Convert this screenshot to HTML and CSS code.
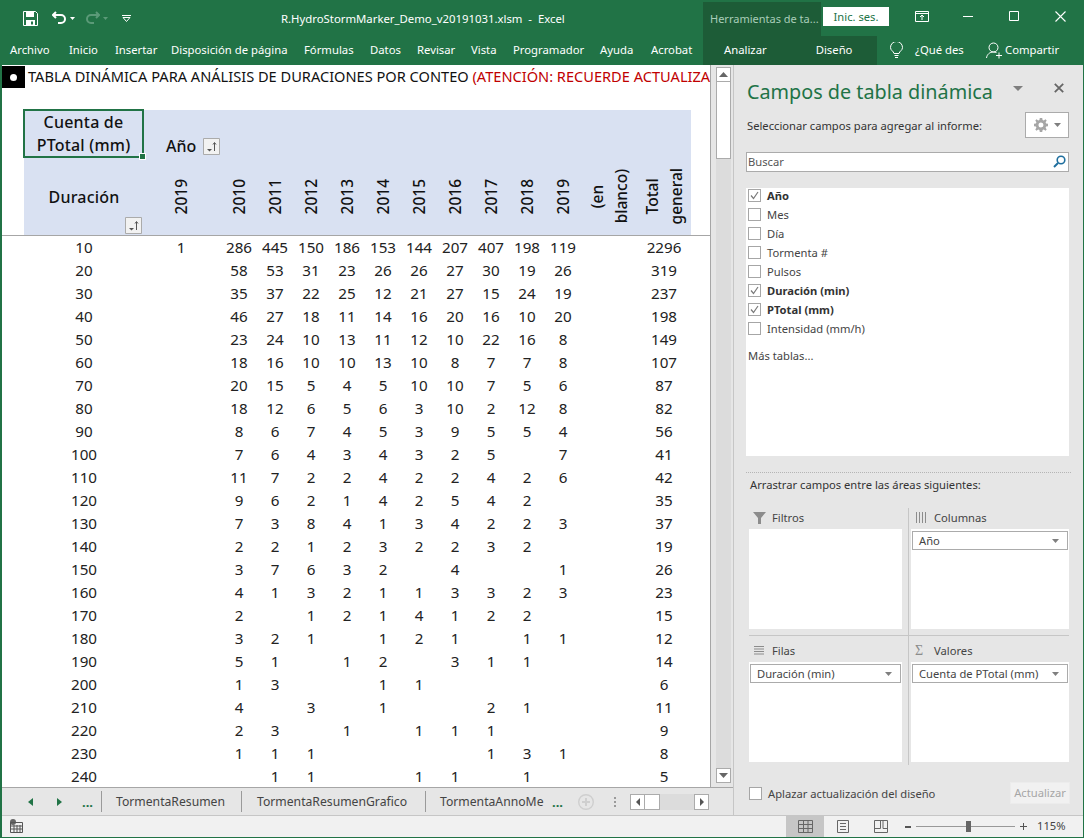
FILE: index.html
```html
<!DOCTYPE html>
<html lang="es">
<head>
<meta charset="utf-8">
<title>R.HydroStormMarker_Demo_v20191031.xlsm - Excel</title>
<link rel="stylesheet" href="styles.css">
</head>
<body>
<div class="window">
  <header class="titlebar">
    <div class="qat">
      <svg class="ic-save" width="15" height="15" viewBox="0 0 15 15"><path d="M.5.5h12l2 2v12H.5z" fill="none" stroke="#fff"/><path d="M3 1h8v5H3zM3 9h9v6H3z" fill="#fff"/><path d="M8 10.500h2v3H8z" fill="#217346"/></svg>
      <svg class="ic-undo" width="15" height="14" viewBox="0 0 15 14"><path d="M4 1 1 4l3 3M1.500 4H9a4 4 0 0 1 0 8H6" fill="none" stroke="#fff" stroke-width="2"/></svg>
      <svg class="ic-caret" width="5" height="3" viewBox="0 0 5 3"><path d="M0 0h5L2.500 3z" fill="#fff"/></svg>
      <svg class="ic-redo" width="15" height="14" viewBox="0 0 15 14"><path d="m11 1 3 3-3 3M13.500 4H6a4 4 0 0 0 0 8h3" fill="none" stroke="#5b9a78" stroke-width="2"/></svg>
      <svg class="ic-caret" width="5" height="3" viewBox="0 0 5 3"><path d="M0 0h5L2.500 3z" fill="#5b9a78"/></svg>
      <svg class="ic-custom" width="9" height="7" viewBox="0 0 9 7"><path d="M0 .5h9M1 2.500h7L4.500 6.500z" fill="none" stroke="#fff"/></svg>
    </div>
    <div class="doc-title">R.HydroStormMarker_Demo_v20191031.xlsm&nbsp; -&nbsp; Excel</div>
    <div class="context-title">Herramientas de ta...</div>
    <div class="signin">Inic. ses.</div>
    <svg class="ic-display" width="14" height="11" viewBox="0 0 14 11"><path d="M.5.500h13v10H.5zM.5 2.500h13M7 9V4M5 6l2-2 2 2" fill="none" stroke="#fff"/></svg>
    <svg class="ic-min" width="10" height="1" viewBox="0 0 10 1"><path d="M0 .5h10" stroke="#fff"/></svg>
    <svg class="ic-max" width="10" height="10" viewBox="0 0 10 10"><path d="M.5.500h9v9h-9z" fill="none" stroke="#fff"/></svg>
    <svg class="ic-close" width="11" height="11" viewBox="0 0 11 11"><path d="m.5.500 10 10m0-10-10 10" stroke="#fff" stroke-width="1.100"/></svg>
  </header>

  <nav class="ribbon">
    <div class="tabs-main">
      <span class="tab">Archivo</span>
      <span class="tab">Inicio</span>
      <span class="tab">Insertar</span>
      <span class="tab">Disposición de página</span>
      <span class="tab">Fórmulas</span>
      <span class="tab">Datos</span>
      <span class="tab">Revisar</span>
      <span class="tab">Vista</span>
      <span class="tab">Programador</span>
      <span class="tab">Ayuda</span>
      <span class="tab">Acrobat</span>
    </div>
    <div class="context-tabs">
      <span class="ctab ctab-a">Analizar</span>
      <span class="ctab ctab-b">Diseño</span>
    </div>
    <svg class="ic-bulb" width="13" height="17" viewBox="0 0 13 17"><path d="M4 11.500C3.500 9 .5 8.500.5 5.500a6 6 0 0 1 12 0c0 3-3 3.500-3.500 6zM4.500 13.500h4M5 15.500h3" fill="none" stroke="#fff"/></svg>
    <span class="tell">¿Qué des</span>
    <svg class="ic-user" width="17" height="17" viewBox="0 0 17 17"><circle cx="7.500" cy="5.500" r="4.500" fill="none" stroke="#fff"/><path d="M.5 16c.5-3.500 3-6 7-6 1 0 2 .2 3 .6M13 10.500v6M10 13.500h6" fill="none" stroke="#fff"/></svg>
    <span class="share">Compartir</span>
  </nav>

  <div class="body-row">
    <div class="workbook">
      <div class="grid-row">
        <main class="sheet">
          <div class="banner"><span class="bullet"><i></i></span><span class="banner-text">TABLA DINÁMICA PARA ANÁLISIS DE DURACIONES POR CONTEO <span class="warn">(ATENCIÓN: RECUERDE ACTUALIZA</span></span></div>
          <div class="pivot-head">
            <div class="selected">Cuenta de<br>PTotal (mm)<i class="handle"></i></div>
            <div class="year-label">Año
              <svg class="filter-btn" width="17" height="17" viewBox="0 0 17 17"><path d="M.5.500h16v16H.5z" fill="#f2f2f2" stroke="#ababab"/><path d="M4 11h5l-2.500 2.500z" fill="#555"/><path d="M11.500 13V5M10 6.500l1.500-2 1.500 2" fill="none" stroke="#555"/></svg>
            </div>
            <div class="dur-label"><span class="dur-text">Duración</span>
              <svg class="filter-btn dur-btn" width="17" height="17" viewBox="0 0 17 17"><path d="M.5.500h16v16H.5z" fill="#f2f2f2" stroke="#ababab"/><path d="M4 11h5l-2.500 2.500z" fill="#555"/><path d="M11.500 13V5M10 6.500l1.500-2 1.500 2" fill="none" stroke="#555"/></svg>
            </div>
            <div class="vh vh-first"><span>2019</span></div>
            <div class="vh"><span>2010</span></div>
            <div class="vh"><span>2011</span></div>
            <div class="vh"><span>2012</span></div>
            <div class="vh"><span>2013</span></div>
            <div class="vh"><span>2014</span></div>
            <div class="vh"><span>2015</span></div>
            <div class="vh"><span>2016</span></div>
            <div class="vh"><span>2017</span></div>
            <div class="vh"><span>2018</span></div>
            <div class="vh"><span>2019</span></div>
            <div class="vh"><span>(en<br>blanco)</span></div>
            <div class="vh"><span>Total<br>general</span></div>
          </div>
          <div class="pivot-body">
            <div class="r"><b>10</b><u>1</u><s>286</s><s>445</s><s>150</s><s>186</s><s>153</s><s>144</s><s>207</s><s>407</s><s>198</s><s>119</s><s></s><s>2296</s></div>
            <div class="r"><b>20</b><u></u><s>58</s><s>53</s><s>31</s><s>23</s><s>26</s><s>26</s><s>27</s><s>30</s><s>19</s><s>26</s><s></s><s>319</s></div>
            <div class="r"><b>30</b><u></u><s>35</s><s>37</s><s>22</s><s>25</s><s>12</s><s>21</s><s>27</s><s>15</s><s>24</s><s>19</s><s></s><s>237</s></div>
            <div class="r"><b>40</b><u></u><s>46</s><s>27</s><s>18</s><s>11</s><s>14</s><s>16</s><s>20</s><s>16</s><s>10</s><s>20</s><s></s><s>198</s></div>
            <div class="r"><b>50</b><u></u><s>23</s><s>24</s><s>10</s><s>13</s><s>11</s><s>12</s><s>10</s><s>22</s><s>16</s><s>8</s><s></s><s>149</s></div>
            <div class="r"><b>60</b><u></u><s>18</s><s>16</s><s>10</s><s>10</s><s>13</s><s>10</s><s>8</s><s>7</s><s>7</s><s>8</s><s></s><s>107</s></div>
            <div class="r"><b>70</b><u></u><s>20</s><s>15</s><s>5</s><s>4</s><s>5</s><s>10</s><s>10</s><s>7</s><s>5</s><s>6</s><s></s><s>87</s></div>
            <div class="r"><b>80</b><u></u><s>18</s><s>12</s><s>6</s><s>5</s><s>6</s><s>3</s><s>10</s><s>2</s><s>12</s><s>8</s><s></s><s>82</s></div>
            <div class="r"><b>90</b><u></u><s>8</s><s>6</s><s>7</s><s>4</s><s>5</s><s>3</s><s>9</s><s>5</s><s>5</s><s>4</s><s></s><s>56</s></div>
            <div class="r"><b>100</b><u></u><s>7</s><s>6</s><s>4</s><s>3</s><s>4</s><s>3</s><s>2</s><s>5</s><s></s><s>7</s><s></s><s>41</s></div>
            <div class="r"><b>110</b><u></u><s>11</s><s>7</s><s>2</s><s>2</s><s>4</s><s>2</s><s>2</s><s>4</s><s>2</s><s>6</s><s></s><s>42</s></div>
            <div class="r"><b>120</b><u></u><s>9</s><s>6</s><s>2</s><s>1</s><s>4</s><s>2</s><s>5</s><s>4</s><s>2</s><s></s><s></s><s>35</s></div>
            <div class="r"><b>130</b><u></u><s>7</s><s>3</s><s>8</s><s>4</s><s>1</s><s>3</s><s>4</s><s>2</s><s>2</s><s>3</s><s></s><s>37</s></div>
            <div class="r"><b>140</b><u></u><s>2</s><s>2</s><s>1</s><s>2</s><s>3</s><s>2</s><s>2</s><s>3</s><s>2</s><s></s><s></s><s>19</s></div>
            <div class="r"><b>150</b><u></u><s>3</s><s>7</s><s>6</s><s>3</s><s>2</s><s></s><s>4</s><s></s><s></s><s>1</s><s></s><s>26</s></div>
            <div class="r"><b>160</b><u></u><s>4</s><s>1</s><s>3</s><s>2</s><s>1</s><s>1</s><s>3</s><s>3</s><s>2</s><s>3</s><s></s><s>23</s></div>
            <div class="r"><b>170</b><u></u><s>2</s><s></s><s>1</s><s>2</s><s>1</s><s>4</s><s>1</s><s>2</s><s>2</s><s></s><s></s><s>15</s></div>
            <div class="r"><b>180</b><u></u><s>3</s><s>2</s><s>1</s><s></s><s>1</s><s>2</s><s>1</s><s></s><s>1</s><s>1</s><s></s><s>12</s></div>
            <div class="r"><b>190</b><u></u><s>5</s><s>1</s><s></s><s>1</s><s>2</s><s></s><s>3</s><s>1</s><s>1</s><s></s><s></s><s>14</s></div>
            <div class="r"><b>200</b><u></u><s>1</s><s>3</s><s></s><s></s><s>1</s><s>1</s><s></s><s></s><s></s><s></s><s></s><s>6</s></div>
            <div class="r"><b>210</b><u></u><s>4</s><s></s><s>3</s><s></s><s>1</s><s></s><s></s><s>2</s><s>1</s><s></s><s></s><s>11</s></div>
            <div class="r"><b>220</b><u></u><s>2</s><s>3</s><s></s><s>1</s><s></s><s>1</s><s>1</s><s>1</s><s></s><s></s><s></s><s>9</s></div>
            <div class="r"><b>230</b><u></u><s>1</s><s>1</s><s>1</s><s></s><s></s><s></s><s></s><s>1</s><s>3</s><s>1</s><s></s><s>8</s></div>
            <div class="r"><b>240</b><u></u><s></s><s>1</s><s>1</s><s></s><s></s><s>1</s><s>1</s><s></s><s>1</s><s></s><s></s><s>5</s></div>
          </div>
        </main>
        <div class="vscroll">
          <div class="sb-btn"><svg width="9" height="5" viewBox="0 0 9 5"><path d="M0 5h9L4.500 0z" fill="#666"/></svg></div>
          <div class="sb-thumb"></div>
          <div class="sb-track"></div>
          <div class="sb-btn"><svg width="9" height="5" viewBox="0 0 9 5"><path d="M0 0h9L4.500 5z" fill="#666"/></svg></div>
        </div>
      </div>
      <div class="tabstrip">
        <svg class="nav-prev" width="5" height="8" viewBox="0 0 5 8"><path d="M5 0v8L0 4z" fill="#217346"/></svg>
        <svg class="nav-next" width="5" height="8" viewBox="0 0 5 8"><path d="M0 0v8l5-4z" fill="#217346"/></svg>
        <span class="more more-a">...</span>
        <span class="sheet-tab tab-1">TormentaResumen</span>
        <span class="sheet-tab tab-2">TormentaResumenGrafico</span>
        <span class="sheet-tab tab-3">TormentaAnnoMe</span>
        <span class="more more-b">...</span>
        <svg class="ic-add" width="16" height="16" viewBox="0 0 16 16"><circle cx="8" cy="8" r="7.300" fill="none" stroke="#cfcfcf" stroke-width="1.400"/><path d="M8 4v8M4 8h8" stroke="#cfcfcf" stroke-width="2"/></svg>
        <span class="split-dots"></span>
        <div class="hscroll">
          <span class="hs-btn"><svg width="4" height="8" viewBox="0 0 4 8"><path d="M4 0v8L0 4z" fill="#555"/></svg></span>
          <span class="hs-thumb"></span>
          <span class="hs-track"></span>
          <span class="hs-btn"><svg width="4" height="8" viewBox="0 0 4 8"><path d="M0 0v8l4-4z" fill="#555"/></svg></span>
        </div>
      </div>
    </div>

    <aside class="pane">
      <div class="pane-title">
        <h1>Campos de tabla dinámica</h1>
        <svg class="pane-caret" width="10" height="5" viewBox="0 0 10 5"><path d="M0 0h10L5 5z" fill="#7f7f7f"/></svg>
        <svg class="pane-close" width="10" height="10" viewBox="0 0 10 10"><path d="m.8.800 8.400 8.400m0-8.400L.8 9.200" stroke="#666" stroke-width="1.800"/></svg>
      </div>
      <div class="pick-row">
        <span>Seleccionar campos para agregar al informe:</span>
        <div class="gear-btn">
          <svg width="14" height="14" viewBox="0 0 14 14"><path d="M5.800 0h2.400l.4 2 1.200.5L11.500 1.300l1.200 1.200-1.100 1.700.5 1.200 1.900.4v2.400l-1.900.4-.5 1.200 1.100 1.700-1.200 1.200-1.700-1.100-1.200.5-.4 1.900H5.800l-.4-1.900-1.200-.5-1.700 1.100-1.200-1.200 1.100-1.700-.5-1.200L0 8.200V5.800l1.900-.4.5-1.200-1.100-1.700 1.200-1.200 1.700 1.200 1.200-.5zM7 4.500a2.500 2.500 0 1 0 0 5 2.500 2.500 0 0 0 0-5z" fill="#a6a6a6" fill-rule="evenodd"/></svg>
          <svg width="7" height="4" viewBox="0 0 7 4"><path d="M0 0h7L3.500 4z" fill="#7f7f7f"/></svg>
        </div>
      </div>
      <div class="search">
        <span>Buscar</span>
        <svg width="13" height="13" viewBox="0 0 13 13"><circle cx="8" cy="5" r="3.800" fill="none" stroke="#1f6f9e" stroke-width="1.600"/><path d="m5 8-4 4" stroke="#1f6f9e" stroke-width="2"/></svg>
      </div>
      <div class="field-list">
        <div class="field-items">
          <label class="field on"><i class="cb"><svg width="11" height="11" viewBox="0 0 11 11"><path d="m2 5.500 2.500 3L9 2" fill="none" stroke="#7a7a7a" stroke-width="1.200"/></svg></i>Año</label>
          <label class="field"><i class="cb"></i>Mes</label>
          <label class="field"><i class="cb"></i>Día</label>
          <label class="field"><i class="cb"></i>Tormenta #</label>
          <label class="field"><i class="cb"></i>Pulsos</label>
          <label class="field on"><i class="cb"><svg width="11" height="11" viewBox="0 0 11 11"><path d="m2 5.500 2.500 3L9 2" fill="none" stroke="#7a7a7a" stroke-width="1.200"/></svg></i>Duración (min)</label>
          <label class="field on"><i class="cb"><svg width="11" height="11" viewBox="0 0 11 11"><path d="m2 5.500 2.500 3L9 2" fill="none" stroke="#7a7a7a" stroke-width="1.200"/></svg></i>PTotal (mm)</label>
          <label class="field"><i class="cb"></i>Intensidad (mm/h)</label>
          <div class="more-tables">Más tablas...</div>
        </div>
      </div>
      <div class="drag-hint">Arrastrar campos entre las áreas siguientes:</div>
      <div class="areas">
        <section class="area area-tl">
          <div class="area-label area-label-top"><svg width="13" height="12" viewBox="0 0 13 12"><path d="M0 0h13L8 6v6H5V6z" fill="#8c8c8c"/></svg>Filtros</div>
          <div class="area-box"></div>
        </section>
        <section class="area area-tr">
          <div class="area-label area-label-top"><svg width="13" height="11" viewBox="0 0 13 11"><path d="M1.500 0v11M4.500 0v11M7.500 0v11M10.500 0v11" stroke="#8c8c8c"/></svg>Columnas</div>
          <div class="area-box"><div class="chip"><span>Año</span><svg width="7" height="4" viewBox="0 0 7 4"><path d="M0 0h7L3.500 4z" fill="#7f7f7f"/></svg></div></div>
        </section>
        <section class="area area-bl">
          <div class="area-label"><svg width="13" height="11" viewBox="0 0 13 11"><path d="M1 1.500h10M1 4h10M1 6.500h10M1 9h10" stroke="#8c8c8c"/></svg>Filas</div>
          <div class="area-box"><div class="chip"><span>Duración (min)</span><svg width="7" height="4" viewBox="0 0 7 4"><path d="M0 0h7L3.500 4z" fill="#7f7f7f"/></svg></div></div>
        </section>
        <section class="area area-br">
          <div class="area-label"><span class="sigma">Σ</span>Valores</div>
          <div class="area-box"><div class="chip"><span>Cuenta de PTotal (mm)</span><svg width="7" height="4" viewBox="0 0 7 4"><path d="M0 0h7L3.500 4z" fill="#7f7f7f"/></svg></div></div>
        </section>
      </div>
      <div class="pane-foot">
        <i class="cb cb-foot"></i>
        <span>Aplazar actualización del diseño</span>
        <div class="update-btn">Actualizar</div>
      </div>
    </aside>
  </div>

  <footer class="status">
    <svg class="ic-macro" width="13" height="14" viewBox="0 0 13 14"><circle cx="3" cy="3" r="3" fill="#666"/><path d="M.5 3.500h12v10H.5zM.5 7h12M.5 10h12M4 6v8M7 6v8M10 6v8" fill="none" stroke="#555"/></svg>
    <div class="view view-on"><svg width="15" height="13" viewBox="0 0 15 13"><path d="M.5.500h14v12H.5zM.5 4.500h14M.5 8.500h14M5.500.5v12M10 .5v12" fill="none" stroke="#666"/></svg></div>
    <div class="view"><svg width="12" height="13" viewBox="0 0 12 13"><path d="M.5.500h11v12H.5zM3 3.500h6M3 6.500h6M3 9.500h6" fill="none" stroke="#666"/></svg></div>
    <div class="view"><svg width="14" height="13" viewBox="0 0 14 13"><path d="M.5.500h13v12H.5zM.5 8.500h6V.5M9 .5v8h4.500" fill="none" stroke="#666"/></svg></div>
    <div class="zoomer"><span class="z-minus"></span><span class="z-line"><i class="z-knob"></i></span><span class="z-plus"></span></div>
    <span class="z-val">115%</span>
  </footer>
</div>
</body>
</html>
```

FILE: styles.css
```css
* { box-sizing: border-box; }
html, body { margin: 0; padding: 0; height: 100%; overflow: hidden; }
body { font-family: "Noto Sans", "Open Sans", sans-serif; font-size: 11.200px; color: #444; }
svg { display: block; flex: none; }

.window {
  width: 1084px; height: 838px; background: #217346;
  padding: 0 1px 1px 2px; display: flex; flex-direction: column;
}

/* title bar */
.titlebar { height: 36px; display: flex; align-items: center; color: #fff; }
.qat { display: flex; align-items: center; width: 279px; flex: none; }
.ic-save { margin-left: 21px; }
.ic-undo { margin-left: 14px; }
.ic-redo { margin-left: 10px; }
.ic-caret { margin-left: 3px; }
.ic-custom { margin-left: 14px; }
.doc-title { width: 422px; flex: none; font-size: 11.350px; white-space: nowrap; }
.context-title {
  width: 118px; height: 34px; margin-top: 2px; flex: none; background: #1d5c37;
  color: #a9cdb9; line-height: 34px; padding-left: 7px; font-size: 11px; white-space: nowrap;
}
.signin {
  width: 66px; height: 19px; margin: -3px 0 0 2px; flex: none; background: #fff; color: #217346;
  text-align: center; line-height: 19px; font-size: 11.200px;
}
.ic-display { margin-left: 26px; margin-top: -4px; }
.ic-min { margin-left: 34px; margin-top: -4px; }
.ic-max { margin-left: 36px; margin-top: -4px; }
.ic-close { margin-left: 36px; margin-top: -4px; }

/* ribbon tabs */
.ribbon { height: 29px; display: flex; align-items: center; color: #fff; padding-left: 8px; font-size: 11.300px; white-space: nowrap; }
.tabs-main {
  width: 693px; flex: none; display: grid; padding-bottom: 2px;
  grid-template-columns: 59px 46px 56px 133px 66px 47px 54px 42px 87px 51px 52px;
}
.context-tabs { width: 174px; height: 29px; padding-bottom: 2px; flex: none; background: #1d5c37; display: flex; align-items: center; }
.ctab-a { margin-left: 21px; }
.ctab-b { margin-left: 49px; }
.ic-bulb { margin-left: 13px; }
.tell { width: 71px; margin: 0 0 2px 12px; flex: none; }
.share { margin: 0 0 2px 2px; }

/* body */
.body-row { height: 750px; display: flex; }
.workbook { width: 732px; flex: none; display: flex; flex-direction: column; background: #e6e6e6; border-right: 1px solid #c6c6c6; }
.grid-row { height: 723px; display: flex; border-bottom: 1px solid #a6a6a6; }

/* sheet */
.sheet {
  width: 709px; flex: none; background: #fff; overflow: hidden; border-right: 1px solid #a6a6a6;
  font-size: 15.200px; color: #222;
}
.banner { height: 45px; padding-top: 1px; display: flex; align-items: flex-start; white-space: nowrap; }
.bullet { width: 23px; height: 22px; background: #000; flex: none; display: flex; align-items: center; justify-content: center; }
.bullet i { width: 7px; height: 7px; border-radius: 50%; background: #fff; }
.banner-text { margin: -1px 0 0 3px; line-height: 22px; font-size: 14.600px; color: #111; }
.warn { color: #c00000; }

.pivot-head {
  margin-left: 22px; width: 667px; height: 125px; background: #d9e1f2; display: grid;
  grid-template-columns: 120px 77px repeat(10, 36px) 56px 54px;
  grid-template-rows: 48px 77px;
  color: #111; font-size: 15.500px;
}
.selected {
  position: relative; grid-column: 1; grid-row: 1; width: 119px; height: 47px; padding-top: 1px; text-align: center; line-height: 23px;
  outline: 2px solid #217346; outline-offset: -1px; font-weight: 500; font-size: 16px; letter-spacing: .2px;
}
.handle { position: absolute; right: -3px; bottom: -3px; width: 7px; height: 7px; background: #217346; border: 1px solid #fff; }
.year-label {
  grid-column: 2 / -1; grid-row: 1; display: flex; align-items: center; padding: 24px 0 0 22px;
  font-weight: 500; font-size: 16px; gap: 7px;
}
.dur-label { grid-column: 1; grid-row: 2; display: flex; flex-direction: column; align-items: center; font-weight: 500; font-size: 16px; letter-spacing: .2px; }
.dur-text { margin-top: 27px; line-height: 24px; }
.dur-btn { align-self: flex-end; margin: 8px 2px 0 0; }
.vh { grid-row: 2; display: flex; align-items: center; justify-content: center; }
.vh span {
  writing-mode: vertical-rl; transform: rotate(180deg); text-align: center; line-height: 24px;
  white-space: nowrap; font-weight: 500;
}
.vh-first { padding-right: 3px; }

.pivot-body { border-top: 1px solid #a6a6a6; padding-left: 22px; }
.r { height: 23px; display: grid; grid-template-columns: 120px 77px repeat(10, 36px) 56px 54px; line-height: 23px; text-align: center; white-space: nowrap; }
.r b { font-weight: 400; }
.r u { text-decoration: none; padding-right: 3px; }
.r s { text-decoration: none; }

/* vertical scrollbar */
.vscroll { width: 22px; flex: none; background: #e6e6e6; padding: 2px 2px 4px 5px; display: flex; flex-direction: column; }
.sb-btn { height: 15px; flex: none; background: #fff; border: 1px solid #ababab; display: flex; align-items: center; justify-content: center; }
.sb-thumb { height: 77px; flex: none; background: #fff; border: 1px solid #ababab; border-top: 0; }
.sb-track { flex: 1; background: #dcdcdc; }

/* sheet tabs */
.tabstrip { height: 27px; display: flex; align-items: center; white-space: nowrap; font-size: 12.200px; color: #444; }
.nav-prev { margin-left: 26px; }
.nav-next { margin-left: 24px; }
.more { color: #217346; font-weight: 700; font-size: 13px; line-height: 14px; }
.more-a { margin-left: 20px; width: 19px; }
.sheet-tab { height: 21px; line-height: 21px; border-left: 1px solid #9a9a9a; padding-left: 14px; flex: none; }
.tab-1 { width: 140px; }
.tab-2 { width: 184px; padding-left: 15px; }
.tab-3 { width: 127px; }
.more-b { width: 20px; }
.ic-add { margin-left: 6px; }
.split-dots { width: 2px; height: 10px; margin-left: 20px; background: repeating-linear-gradient(#9a9a9a 0 2px, transparent 2px 4px); }
.hscroll { width: 79px; height: 16px; margin-left: 14px; display: flex; background: #dcdcdc; }
.hs-btn { width: 15px; background: #fff; border: 1px solid #ababab; display: flex; align-items: center; justify-content: center; }
.hs-thumb { width: 15px; background: #fff; border: 1px solid #ababab; border-left: 0; }
.hs-track { flex: 1; }

/* pivot pane */
.pane { width: 349px; flex: none; background: #e6e6e6; padding: 0 12px; }
.pane-title { height: 40px; padding-top: 13px; display: flex; align-items: center; }
.pane-title h1 { margin: 0 0 0 1px; font-size: 19.800px; font-weight: 400; color: #217346; line-height: 27px; white-space: nowrap; width: 266px; flex: none; }
.pane-caret { margin-top: -6px; }
.pane-close { margin: -7px 0 0 31px; }
.pick-row { height: 26px; margin: 7px 2px 0 1px; display: flex; align-items: center; justify-content: space-between; color: #333; }
.gear-btn { width: 44px; height: 26px; background: #fff; border: 1px solid #ababab; display: flex; align-items: center; justify-content: center; gap: 6px; }
.search { height: 20px; margin: 14px 2px 0 0; background: #fff; border: 1px solid #ababab; display: flex; align-items: center; justify-content: space-between; padding: 0 2px 2px 1px; color: #555; }
.field-list { height: 268px; margin: 16px 2px 0 0; background: #fff; padding-top: 1px; }
.field-items { margin-top: -3px; padding-left: 2px; }
.field { display: flex; align-items: center; height: 19px; color: #444; gap: 6px; }
.field.on { font-weight: 700; color: #333; }
.cb { width: 13px; height: 13px; flex: none; background: #fff; border: 1px solid #a6a6a6; display: flex; align-items: center; justify-content: center; }
.more-tables { height: 19px; line-height: 19px; margin-top: 8px; color: #444; }
.drag-hint { height: 26px; margin-top: 16px; line-height: 23px; border-top: 1px dotted #b5b5b5; padding-left: 4px; color: #333; }
.areas { margin: 10px 0 0 3px; display: grid; grid-template-columns: 160px 160px; grid-template-rows: 128px 129px; }
.area { display: flex; flex-direction: column; }
.area-tl, .area-bl { border-right: 1px solid #c6c6c6; padding-right: 6px; }
.area-tr, .area-br { padding-left: 2px; }
.area-tl, .area-tr { border-bottom: 1px solid #c6c6c6; }
.area-label { height: 26px; padding: 3px 0 0 4px; display: flex; align-items: center; gap: 6px; color: #444; flex: none; }
.area-label-top { height: 21px; padding: 0 0 2px 4px; }
.area-box { height: 100px; background: #fff; padding: 2px 1px; }
.sigma { width: 13px; font-family: "Liberation Serif", serif; font-size: 14px; color: #8c8c8c; line-height: 12px; }
.chip { height: 19px; background: #fff; border: 1px solid #ababab; display: flex; align-items: center; justify-content: space-between; padding: 0 8px 0 6px; color: #444; }
.pane-foot { display: flex; align-items: center; height: 22px; margin: 17px 1px 0 3px; }
.cb-foot { margin-right: 6px; }
.update-btn { margin-left: auto; width: 60px; height: 22px; background: #f1f1f1; border: 1px solid #ececec; color: #a6a6a6; text-align: center; line-height: 20px; }

/* status bar */
.status { flex: 1; background: #f1f1f1; border-top: 1px solid #c6c6c6; display: flex; align-items: stretch; color: #444; }
.ic-macro { margin: 3px 0 0 8px; }
.view { width: 38px; display: flex; align-items: center; justify-content: center; }
.view-on { background: #c6c6c6; margin-left: 763px; }
.zoomer { width: 122px; margin-left: 5px; display: flex; align-items: center; }
.z-minus { width: 6px; height: 2px; background: #555; }
.z-line { position: relative; flex: 1; height: 1px; background: #999; margin: 0 5px; }
.z-knob { position: absolute; left: 50px; top: -5px; width: 5px; height: 11px; background: #666; }
.z-plus { width: 7px; height: 7px; background: linear-gradient(#555, #555) center/7px 1px no-repeat, linear-gradient(#555, #555) center/1px 7px no-repeat; }
.z-val { margin-left: 10px; line-height: 19px; }
```
